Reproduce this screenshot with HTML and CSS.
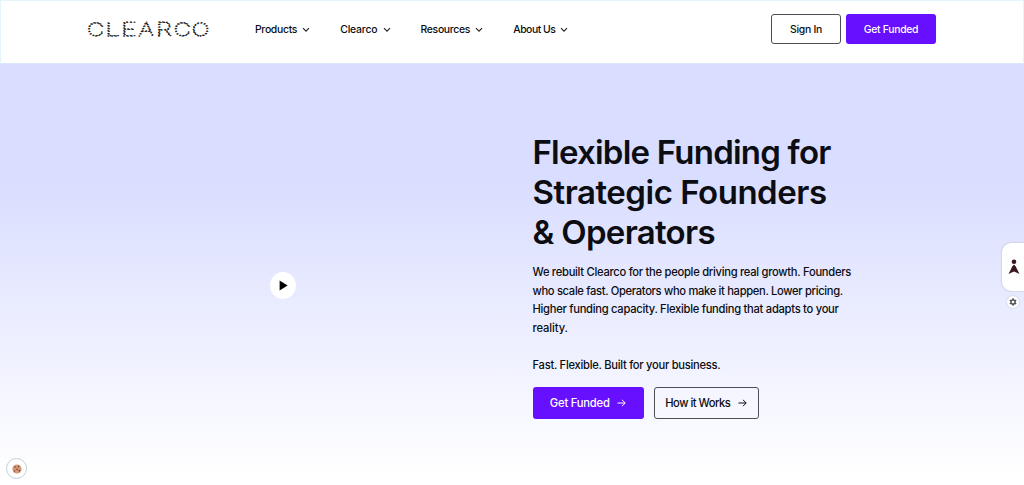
FILE: index.html
```
<!DOCTYPE html>
<html lang="en">
<head>
    <meta charset="UTF-8">
    <meta name="viewport" content="width=device-width, initial-scale=1.0">
    <title>Clearco</title>
    <link rel="stylesheet" href="styles.css">
</head>
<body>
    <header class="header">
        <a class="logo" href="#">
            <svg width="124" height="18" viewBox="0 0 124 18" aria-label="Clearco">
                <text transform="translate(-1 15.9) scale(1.28 1)">C</text>
                <text transform="translate(17.2 15.9) scale(1.45 1)">L</text>
                <text transform="translate(33 15.9) scale(1.45 1)">E</text>
                <text transform="translate(50.6 15.9) scale(1.3 1)">A</text>
                <text transform="translate(68 15.9) scale(1.4 1)">R</text>
                <text transform="translate(85.8 15.9) scale(1.28 1)">C</text>
                <text transform="translate(103.8 15.9) scale(1.28 1)">O</text>
            </svg>
        </a>
        <nav class="nav">
            <a class="products" href="#">Products <svg class="chevron" viewBox="0 0 8 6"><path d="M1 1.2 4 4.2 7 1.2"/></svg></a>
            <a class="clearco" href="#">Clearco <svg class="chevron" viewBox="0 0 8 6"><path d="M1 1.2 4 4.2 7 1.2"/></svg></a>
            <a class="resources" href="#">Resources <svg class="chevron" viewBox="0 0 8 6"><path d="M1 1.2 4 4.2 7 1.2"/></svg></a>
            <a class="about" href="#">About Us <svg class="chevron" viewBox="0 0 8 6"><path d="M1 1.2 4 4.2 7 1.2"/></svg></a>
        </nav>
        <div class="actions">
            <a class="btn btn-outline" href="#">Sign In</a>
            <a class="btn btn-primary" href="#">Get Funded</a>
        </div>
    </header>

    <main class="hero">
        <div class="video">
            <button class="play" aria-label="Play">
                <svg width="9" height="11" viewBox="0 0 9 11"><path d="M.6.4 8.6 5.5.6 10.6Z"/></svg>
            </button>
        </div>
        <div class="copy">
            <h1>Flexible Funding for<br><span class="line-2">Strategic Founders</span><br><span class="line-3">&amp; Operators</span></h1>
            <p>We rebuilt Clearco for the people driving real growth. Founders<br><span class="tight">who scale fast. Operators who make it happen. Lower pricing.</span><br>Higher funding capacity. Flexible funding that adapts to your<br><span class="loose">reality.</span></p>
            <p class="tagline">Fast. Flexible. Built for your business.</p>
            <div class="cta">
                <a class="btn btn-primary" href="#">Get Funded <svg class="arrow" viewBox="0 0 9 8"><path d="M.5 4h7.6M5 .8 8.2 4 5 7.2"/></svg></a>
                <a class="btn btn-outline" href="#">How it Works <svg class="arrow" viewBox="0 0 9 8"><path d="M.5 4h7.6M5 .8 8.2 4 5 7.2"/></svg></a>
            </div>
        </div>
    </main>

    <!-- floating widgets -->
    <button class="access" aria-label="Accessibility">
        <svg width="12" height="16" viewBox="0 0 12 16"><circle cx="6" cy="2.8" r="2.3"/><path d="M6 5.6 7.6 7.2 11.5 15 6 12.4.5 15 4.4 7.2Z"/></svg>
    </button>
    <button class="settings" aria-label="Settings">
        <svg width="8" height="8" viewBox="0 0 8 8"><path class="teeth" d="M4 .3v7.4M.8 2.15l6.4 3.7M.8 5.85l6.4-3.7"/><circle cx="4" cy="4" r="2.1"/></svg>
    </button>
    <button class="cookie" aria-label="Cookie preferences">
        <svg width="10" height="10" viewBox="0 0 10 10"><circle cx="5" cy="5" r="4.6" fill="#d59a78"/><g fill="#743c35"><circle cx="3" cy="3" r=".8"/><circle cx="6.5" cy="2.6" r=".8"/><circle cx="5" cy="5.3" r=".8"/><circle cx="2.6" cy="6.9" r=".7"/><circle cx="7.4" cy="6.6" r=".9"/></g></svg>
    </button>
</body>
</html>
```
FILE: styles.css
```
* {
    box-sizing: border-box;
}
body {
    margin: 0;
    height: 485px;
    overflow: hidden;
    display: flex;
    flex-direction: column;
    font-family: Inter, "Liberation Sans", sans-serif;
    color: #0b0d12;
}
a {
    color: inherit;
    text-decoration: none;
}
button {
    padding: 0;
    border: none;
    background: #fff;
    display: flex;
    align-items: center;
    justify-content: center;
}
.header {
    height: 64px;
    flex: none;
    display: flex;
    align-items: flex-start;
    padding: 13px 87px 0;
    border: 1px solid #e2f6f9;
    border-bottom-color: #d9e6fb;
    background: #fff;
}
.logo {
    width: 124px;
    margin-top: 6px;
}
.logo svg {
    display: block;
    overflow: visible;
}
.logo text {
    font-size: 18.5px;
    font-weight: 100;
    fill: none;
    stroke: #222;
    stroke-width: 1.4;
    stroke-linecap: round;
    stroke-dasharray: 0 2.65;
}
.nav {
    display: flex;
    gap: 30px;
    margin: 8px 0 0 43px;
    font-size: 10.4px;
    font-weight: 500;
    line-height: 15px;
    letter-spacing: -0.3px;
}
.nav a {
    display: flex;
    align-items: center;
    gap: 5.2px;
    white-space: nowrap;
}
.nav .clearco {
    letter-spacing: -0.2px;
}
.nav .about {
    letter-spacing: -0.5px;
}
.chevron {
    width: 8px;
    height: 6px;
    fill: none;
    stroke: #222;
    stroke-width: 1.1;
}
.actions {
    display: flex;
    gap: 5px;
    margin-left: auto;
}
.btn {
    height: 30px;
    display: flex;
    align-items: center;
    justify-content: center;
    border-radius: 3px;
    font-size: 10.4px;
    font-weight: 500;
    letter-spacing: -0.3px;
    white-space: nowrap;
}
.btn-primary {
    width: 90px;
    background: #6610ff;
    color: #fff;
}
.btn-outline {
    width: 70px;
    border: 1px solid #4d4d55;
}
.hero {
    flex: 1;
    display: flex;
    background: linear-gradient(#d9ddff 0, #d9ddff 27%, #fff 98%);
}
.video {
    width: 532.5px;
    flex: none;
    padding: 208px 0 0 270px;
}
.play {
    width: 26px;
    height: 27px;
    border-radius: 50%;
}
.copy {
    padding-top: 68px;
}
h1 {
    margin: 0;
    font-size: 33px;
    line-height: 40px;
    font-weight: 600;
    letter-spacing: -0.78px;
    white-space: nowrap;
}
.line-2 {
    letter-spacing: -0.48px;
}
.line-3 {
    letter-spacing: -0.7px;
}
p {
    margin: 11px 0 0;
    font-size: 11.2px;
    line-height: 18.6px;
    font-weight: 500;
    letter-spacing: -0.28px;
    white-space: nowrap;
}
.tight {
    letter-spacing: -0.33px;
}
.loose {
    letter-spacing: -0.1px;
}
.tagline {
    margin-top: 19px;
}
.cta {
    display: flex;
    gap: 10px;
    margin-top: 12px;
}
.cta .btn {
    height: 32px;
    gap: 7.5px;
    font-size: 11.2px;
}
.cta .btn-primary {
    width: 111px;
    letter-spacing: -0.2px;
}
.cta .btn-outline {
    width: 105px;
    letter-spacing: -0.5px;
}
.arrow {
    width: 9px;
    height: 8px;
    fill: none;
    stroke: currentColor;
    stroke-width: 1;
}
.access {
    position: absolute;
    top: 243px;
    right: 0;
    width: 22px;
    height: 48px;
    border-radius: 9px 0 0 9px;
    box-shadow: 0 0 2px #aaaabc;
    fill: #3b1820;
}
.access svg {
    margin-left: 2px;
}
.settings {
    position: absolute;
    top: 296px;
    right: 5px;
    width: 12px;
    height: 12px;
    border-radius: 50%;
    box-shadow: 0 0 2px #bbbbc8;
}
.settings svg {
    fill: #fff;
    stroke: #55555c;
    stroke-width: 1.5;
}
.cookie {
    position: absolute;
    left: 6px;
    top: 458px;
    width: 21px;
    height: 21px;
    border: 1px solid #bfd0d4;
    border-radius: 50%;
}
```
